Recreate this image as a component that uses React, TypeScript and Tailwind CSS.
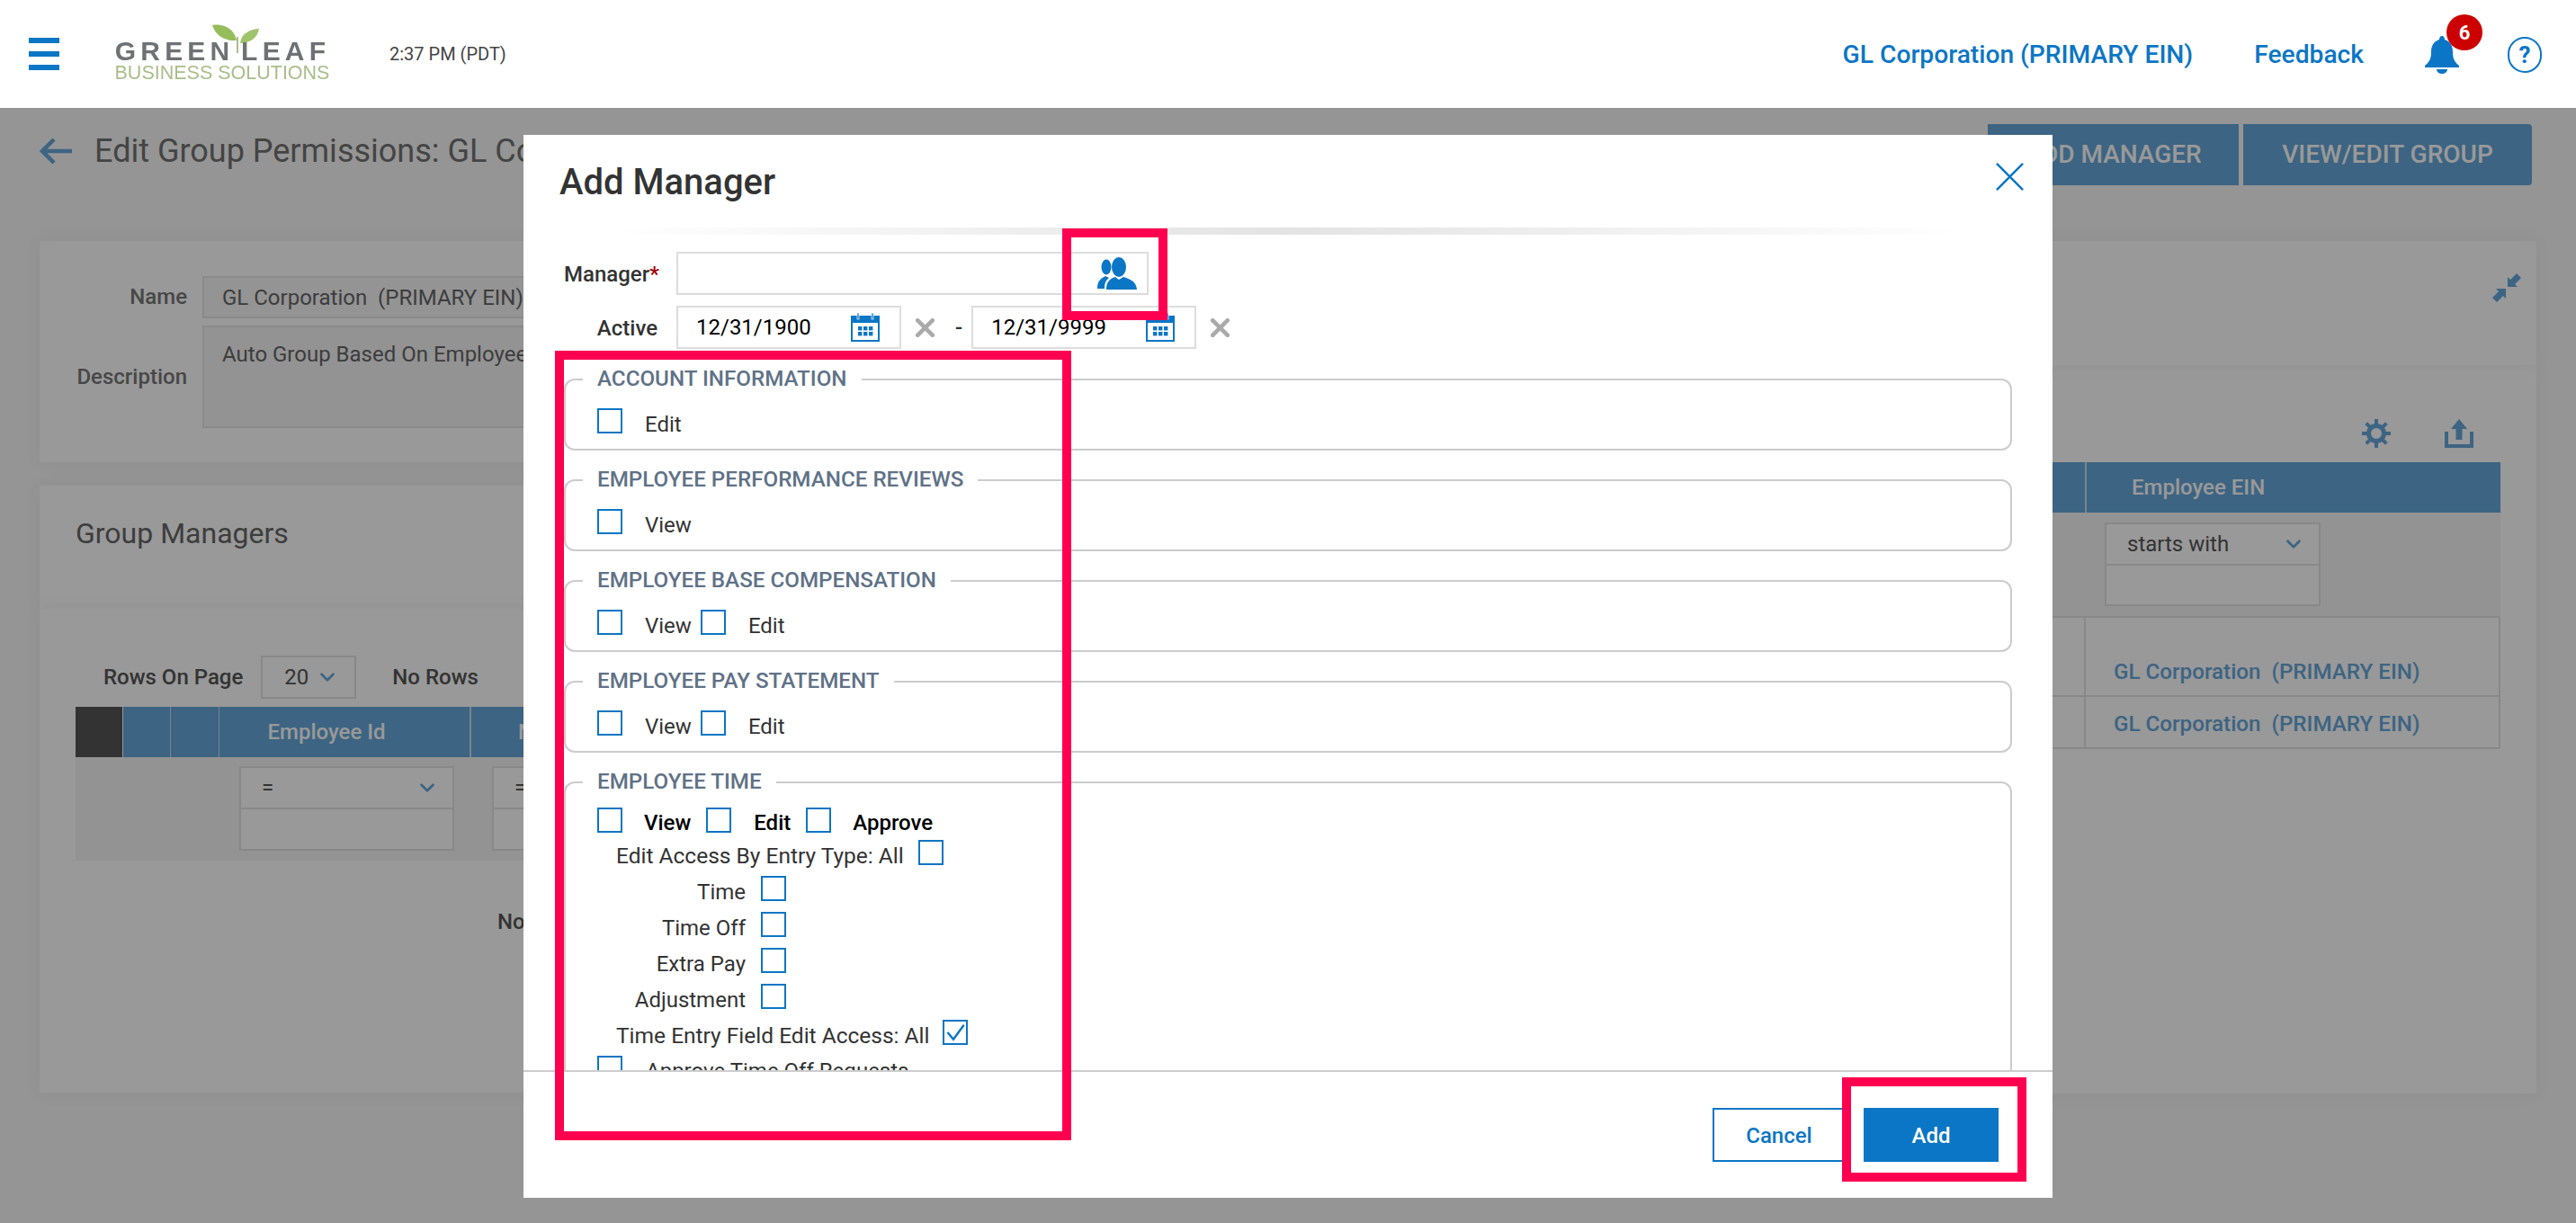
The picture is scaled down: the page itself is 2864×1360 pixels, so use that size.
import React from "react";
import { ChevronDown } from "lucide-react";

const font = { fontFamily: '"Roboto", "Liberation Sans", sans-serif' };

function Check({ checked = false }: { checked?: boolean }) {
  return (
    <span className="flex h-[28px] w-[28px] shrink-0 items-center justify-center border-2 border-[#0b76c5] bg-white">
      {checked && (
        <svg width="24" height="24" viewBox="0 0 24 24" fill="none">
          <path d="M3.5 12 L10 19.7 L21.7 3.7" stroke="#0b76c5" strokeWidth="2.4" />
        </svg>
      )}
    </span>
  );
}

function Fieldset({ title, children, className }: { title: string; children: React.ReactNode; className: string }) {
  return (
    <div className={`relative shrink-0 rounded-[12px] border-2 border-[#cccccc] ${className}`}>
      <div className="absolute left-[19px] top-[-16px] bg-white px-[16px] text-[24.2px] leading-[28px] font-medium text-[#5f7287]">
        {title}
      </div>
      {children}
    </div>
  );
}

function Calendar() {
  return (
    <svg width="32" height="32" viewBox="0 0 32 32">
      <rect x="0" y="3" width="32" height="29" fill="#0b76c5" />
      <rect x="2" y="11" width="28" height="19" fill="#fff" />
      <rect x="7" y="0" width="2" height="7" fill="#0b76c5" stroke="#fff" strokeWidth="0.7" />
      <rect x="23" y="0" width="2" height="7" fill="#0b76c5" stroke="#fff" strokeWidth="0.7" />
      {[8, 14, 20].map((x) =>
        [15, 21].map((y) => <rect key={`${x}-${y}`} x={x} y={y} width="4.4" height="4.4" fill="#0b76c5" />)
      )}
    </svg>
  );
}

function People() {
  return (
    <svg width="46" height="36" viewBox="0 0 46 36" fill="#0b76c5">
      <ellipse cx="11" cy="11" rx="5.5" ry="8.5" />
      <path d="M1 35 C1 27 4 24 10 21 L14 23 C10 26 9 30 9 35 Z" />
      <ellipse cx="25" cy="11" rx="8" ry="11" />
      <path d="M11 36 C11 27 15 24 21 22 L25 25 L30 22 C39 25 44 27 45 36 Z" />
    </svg>
  );
}

function Cross({ size, color, width }: { size: number; color: string; width: number }) {
  return (
    <svg width={size} height={size} viewBox="0 0 32 32" fill="none" stroke={color} strokeWidth={width}>
      <path d="M1 1 L31 31 M31 1 L1 31" />
    </svg>
  );
}

function DateField({ value }: { value: string }) {
  return (
    <div className="flex h-[48px] w-[250px] items-center justify-between border-2 border-[#dddddd] pl-[20px] pr-[22px] text-[24px] text-black">
      <span>{value}</span>
      <Calendar />
    </div>
  );
}

function Section({ title, items }: { title: string; items: string[] }) {
  return (
    <Fieldset title={title} className="h-[80px] w-[1610px]">
      <div className="flex h-full items-start pl-[35px] pt-[31px] text-[24px] leading-[28px] text-[#333333]">
        {items.map((it) => (
          <div key={it} className="flex items-start">
            <Check />
            <span className="ml-[25px] mr-[10px] mt-[4px]">{it}</span>
          </div>
        ))}
      </div>
    </Fieldset>
  );
}

function FilterBox({ label, className }: { label: string; className: string }) {
  return (
    <div className={`border-2 border-[#e3e3e3] bg-white ${className}`}>
      <div className="flex h-[46px] items-center justify-between border-b-2 border-[#e3e3e3] pl-[23px] pr-[15px] text-[24px] text-[#555555]">
        <span>{label}</span>
        <ChevronDown className="h-[26px] w-[26px] text-[#66a7d9]" strokeWidth={2.5} />
      </div>
      <div className="h-[46px]" />
    </div>
  );
}

function TypeRow({ label, checked }: { label: string; checked?: boolean }) {
  return (
    <div className="flex h-[40px] items-start">
      <span className="mt-[4px] w-[165px] text-right">{label}</span>
      <span className="ml-[17px]">
        <Check checked={checked} />
      </span>
    </div>
  );
}

export default function App() {
  return (
    <div className="relative h-[1360px] w-[2864px] overflow-hidden bg-[#f8f8f8]" style={font}>
      <header className="relative z-20 flex h-[120px] items-center bg-white">
        <div className="ml-[32px] flex w-[34px] flex-col gap-[9px]">
          <span className="h-[6px] bg-[#0b76c5]" />
          <span className="h-[6px] bg-[#0b76c5]" />
          <span className="h-[6px] bg-[#0b76c5]" />
        </div>
        <div className="relative ml-[60px] h-[70px] w-[240px] blur-[0.5px]">
          <svg className="absolute left-[108px] top-[0px]" width="56" height="34" viewBox="0 0 56 34">
            <path d="M2 3 C14 1 27 7 29 20 C18 21 6 16 2 3 Z" fill="#96bd5c" />
            <path d="M54 7 C45 7 34 12 33 23 C43 23 52 18 54 7 Z" fill="#9fc36a" />
            <path d="M30 16 V40" stroke="#a9bf90" strokeWidth="2" />
          </svg>
          <div
            className="absolute left-0 top-[17px] w-[243px] text-center text-[30px] leading-[30px] font-bold tracking-[5.2px] whitespace-nowrap text-[#6f7274]"
            style={{ fontFamily: '"Liberation Sans", sans-serif' }}
          >
            GREEN&#8202;LEAF
          </div>
          <div
            className="absolute left-0 top-[44px] w-[242px] text-center text-[21.5px] leading-[24px] whitespace-nowrap text-[#a9bd8b]"
            style={{ fontFamily: '"Liberation Sans", sans-serif' }}
          >
            BUSINESS SOLUTIONS
          </div>
        </div>
        <div className="ml-[67px] text-[20px] text-[#444444]">2:37 PM (PDT)</div>
        <div className="ml-auto flex items-center pt-[3px] text-[28.2px] font-medium text-[#0b76c5]">
          <span>GL Corporation (PRIMARY EIN)</span>
          <span className="ml-[68px]">Feedback</span>
          <div className="relative ml-[68px] h-[42px] w-[38px]">
            <svg width="38" height="42" viewBox="0 0 38 42" fill="#0b76c5">
              <path d="M19 0 C21 0 22 2 22 4 C29 6 31 12 31 18 C31 25 33 29 38 33 V35 H0 V33 C5 29 7 25 7 18 C7 12 9 6 16 4 C16 2 17 0 19 0 Z" />
              <path d="M13 37 H25 C25 40 22 42 19 42 C16 42 13 40 13 37 Z" />
            </svg>
            <span className="absolute left-[24px] top-[-24px] flex h-[40px] w-[40px] items-center justify-center rounded-full bg-[#cc0000] text-[22px] font-bold text-white">
              6
            </span>
          </div>
          <span className="ml-[54px] mr-[38px] flex h-[40px] w-[38px] items-center justify-center rounded-full border-2 border-[#0b76c5] text-[26px] font-bold">
            ?
          </span>
        </div>
      </header>

      <main className="px-[44px]">
        <div className="flex h-[148px] items-start justify-between">
          <div className="flex items-center pt-[21px] text-[36px] text-[#727272]">
            <svg width="36" height="30" viewBox="0 0 36 30" fill="none" stroke="#66a7d9" strokeWidth="4.5">
              <path d="M36 15 H3 M16 2 L3 15 L16 28" />
            </svg>
            <span className="ml-[25px] w-[477px] overflow-hidden whitespace-nowrap">Edit Group Permissions: GL Corporation (PRIMARY EIN)</span>
          </div>
          <div className="mr-[5px] mt-[18px] flex gap-[5px] text-[28px] font-medium text-white">
            <div className="flex h-[68px] w-[279px] items-center justify-center bg-[#66a7d9]">ADD MANAGER</div>
            <div className="flex h-[68px] w-[321px] items-center justify-center rounded-r-[4px] bg-[#66a7d9]">VIEW/EDIT GROUP</div>
          </div>
        </div>

        <div className="flex items-start">
          <div className="w-[1400px] shrink-0">
            <section className="flex h-[246px] bg-white pt-[39px] shadow-[0_0_20px_rgba(0,0,0,0.05)]">
              <div className="w-[164px] shrink-0 text-right text-[24px] font-medium text-[#777777]">
                <div className="flex h-[46px] items-center justify-end">Name</div>
                <div className="mt-[48px]">Description</div>
              </div>
              <div className="ml-[17px] flex-1 pr-[20px] text-[24px] text-[#666666]">
                <div className="flex h-[47px] items-center border-2 border-[#e6e6e6] bg-[#f7f7f7] pl-[20px]">GL Corporation&nbsp; (PRIMARY EIN)</div>
                <div className="mt-[8px] h-[114px] border-2 border-[#e6e6e6] bg-[#f5f5f5] pl-[20px] pt-[12px]">Auto Group Based On Employee EIN</div>
              </div>
            </section>
            <section className="mt-[26px] flex h-[137px] items-start bg-white pl-[40px] pt-[29px] text-[32px] text-[#666666] shadow-[0_0_20px_rgba(0,0,0,0.05)]">
              Group Managers
            </section>
            <section className="h-[538px] bg-white pl-[40px] pr-[20px] shadow-[0_0_20px_rgba(0,0,0,0.05)]">
              <div className="flex h-[109px] items-center pl-[31px] pt-[43px] text-[24px] font-medium text-[#555555]">
                <span>Rows On Page</span>
                <div className="ml-[20px] flex h-[48px] w-[106px] items-center border-2 border-[#e3e3e3] pl-[24px] font-normal">
                  20
                  <ChevronDown className="ml-[8px] h-[26px] w-[26px] text-[#66a7d9]" strokeWidth={2.5} />
                </div>
                <span className="ml-[40px]">No Rows</span>
                <svg className="ml-[123px]" width="40" height="36" viewBox="0 0 40 36" fill="none" stroke="#66a7d9" strokeWidth="3">
                  <path d="M2 8 L12 18 M2 8 V17 M2 8 H11" />
                  <path d="M5 24 L15 32" />
                </svg>
              </div>
              <div className="flex h-[56px] text-[24px] font-medium text-white">
                <div className="w-[52px] bg-[#555555]" />
                <div className="ml-[1px] w-[53px] border-r border-[#c9dcec] bg-[#66a7d9]" />
                <div className="w-[54px] border-r border-[#c9dcec] bg-[#66a7d9]" />
                <div className="flex w-[280px] items-center justify-center border-r-2 border-[#c9dcec] bg-[#66a7d9] pr-[40px]">Employee Id</div>
                <div className="flex flex-1 items-center bg-[#66a7d9] pl-[52px]">Name</div>
              </div>
              <div className="flex h-[115px] bg-[#f5f5f5] pl-[182px] pt-[10px]">
                <FilterBox label="=" className="h-[94px] w-[239px]" />
                <FilterBox label="=" className="ml-[42px] h-[94px] w-[239px]" />
              </div>
              <div className="pl-[469px] pt-[50px] text-[24px] font-medium text-[#555555]">No Rows To Show</div>
            </section>
          </div>

          <div className="ml-[20px] flex-1">
            <section className="relative h-[138px] bg-white shadow-[0_0_20px_rgba(0,0,0,0.05)]">
              <svg className="absolute right-[17px] top-[36px]" width="32" height="32" viewBox="0 0 32 32" fill="#66a7d9">
                <path d="M27 0 L32 5 L25 12 L28 15 H17 V4 L20 7 Z" />
                <path d="M5 32 L0 27 L7 20 L4 17 H15 V28 L12 25 Z" />
              </svg>
            </section>
            <section className="h-[810px] bg-white shadow-[0_0_20px_rgba(0,0,0,0.05)]">
              <div className="flex h-[108px] items-start justify-end pr-[70px] pt-[60px]">
                <svg width="32" height="32" viewBox="0 0 32 32" fill="none" stroke="#66a7d9">
                  <circle cx="16" cy="16" r="8.5" strokeWidth="5" />
                  <path d="M16 0 V32 M0 16 H32 M4.7 4.7 L27.3 27.3 M27.3 4.7 L4.7 27.3" strokeWidth="4" strokeDasharray="6 20 6 0" />
                </svg>
                <svg className="ml-[60px]" width="32" height="32" viewBox="0 0 32 32" fill="#66a7d9">
                  <path d="M16 0 L25 11 H19.5 V23 H12.5 V11 H7 Z" />
                  <path d="M0 14 H4 V28 H28 V14 H32 V32 H0 Z" />
                </svg>
              </div>
              <div className="mr-[40px]">
                <div className="flex h-[56px] bg-[#66a7d9] text-[24px] font-medium text-white">
                  <div className="flex-1 border-r-2 border-[#c9dcec]" />
                  <div className="flex w-[460px] items-center pl-[50px]">Employee EIN</div>
                </div>
                <div className="flex h-[115px] justify-end bg-[#f5f5f5] pt-[11px]">
                  <FilterBox label="starts with" className="mr-[200px] h-[93px] w-[240px]" />
                </div>
                <div className="border-2 border-[#e3e3e3] text-[24.2px] font-medium text-[#66a7d9]">
                  <div className="flex h-[88px] border-b-2 border-[#e3e3e3]">
                    <div className="flex-1 border-r-2 border-[#e3e3e3]" />
                    <div className="flex w-[459px] items-end pb-[8px] pl-[31px]">GL Corporation&nbsp; (PRIMARY EIN)</div>
                  </div>
                  <div className="flex h-[56px]">
                    <div className="flex-1 border-r-2 border-[#e3e3e3]" />
                    <div className="flex w-[459px] items-center pl-[31px] pt-[4px]">GL Corporation&nbsp; (PRIMARY EIN)</div>
                  </div>
                </div>
              </div>
            </section>
          </div>
        </div>
      </main>

      <div className="absolute inset-x-0 bottom-0 top-[120px] z-10 bg-black/40" />

      <div className="absolute left-[582px] top-[150px] z-20 flex h-[1182px] w-[1700px] flex-col bg-white text-[#333333]">
        <div className="relative flex h-[103px] shrink-0 items-start justify-between pl-[40px] pr-[32px] pt-[27px]">
          <h2 className="text-[40px] leading-[52px] font-medium text-[#333333]">Add Manager</h2>
          <span className="mt-[4px]">
            <Cross size={31} color="#0b76c5" width={2.6} />
          </span>
          <div className="absolute inset-x-[100px] bottom-[-8px] h-[8px] bg-gradient-to-r from-transparent via-[#e3e3e3] to-transparent" />
        </div>

        <div className="flex-1 overflow-hidden pl-[45px]">
          <div className="mt-[27px] flex h-[48px] items-center">
            <span className="mt-[2px] w-[104px] text-right text-[24px] font-medium">
              Manager<span className="text-[#a00000]">*</span>
            </span>
            <div className="ml-[21px] flex h-[48px] w-[525px] items-center justify-end border-2 border-[#dddddd] pr-[10px]">
              <People />
            </div>
          </div>
          <div className="mt-[12px] flex h-[48px] items-center">
            <span className="mt-[2px] w-[104px] text-right text-[24px] font-medium">Active</span>
            <div className="ml-[21px]">
              <DateField value="12/31/1900" />
            </div>
            <span className="mx-[16px]">
              <Cross size={21} color="#aaaaaa" width={7} />
            </span>
            <span className="ml-[7px] text-[24px] font-medium">-</span>
            <div className="ml-[10px]">
              <DateField value="12/31/9999" />
            </div>
            <span className="mx-[16px]">
              <Cross size={21} color="#aaaaaa" width={7} />
            </span>
          </div>

          <div className="mt-[33px] flex flex-col gap-[32px]">
            <Section title="ACCOUNT INFORMATION" items={["Edit"]} />
            <Section title="EMPLOYEE PERFORMANCE REVIEWS" items={["View"]} />
            <Section title="EMPLOYEE BASE COMPENSATION" items={["View", "Edit"]} />
            <Section title="EMPLOYEE PAY STATEMENT" items={["View", "Edit"]} />
            <Fieldset title="EMPLOYEE TIME" className="h-[420px] w-[1610px]">
              <div className="pl-[35px] pt-[27px] text-[24px] leading-[28px] text-[#333333]">
                <div className="flex h-[36px] items-start text-black">
                  <Check />
                  <span className="ml-[24px] mr-[17px] mt-[3px] font-medium">View</span>
                  <Check />
                  <span className="ml-[25px] mr-[17px] mt-[3px] font-medium">Edit</span>
                  <Check />
                  <span className="ml-[24px] mt-[3px] font-medium">Approve</span>
                </div>
                <div className="ml-[21px] flex h-[40px] items-start">
                  <span className="mt-[4px] text-[24.5px]">Edit Access By Entry Type: All</span>
                  <span className="ml-[16px]"><Check /></span>
                </div>
                <TypeRow label="Time" />
                <TypeRow label="Time Off" />
                <TypeRow label="Extra Pay" />
                <TypeRow label="Adjustment" />
                <div className="ml-[21px] flex h-[40px] items-start">
                  <span className="mt-[4px] text-[24.5px]">Time Entry Field Edit Access: All</span>
                  <span className="ml-[14px]"><Check checked /></span>
                </div>
                <div className="flex h-[40px] items-start">
                  <Check />
                  <span className="ml-[26px] mt-[3px]">Approve Time Off Requests</span>
                </div>
              </div>
            </Fieldset>
          </div>
        </div>

        <div className="flex h-[142px] shrink-0 items-start justify-end gap-[20px] border-t-2 border-[#cccccc] pr-[60px] pt-[40px] text-[24px] font-medium">
          <button className="flex h-[60px] w-[148px] items-center justify-center border-2 border-[#0b76c5] pt-[2px] text-[#0b76c5]">Cancel</button>
          <button className="flex h-[60px] w-[150px] items-center justify-center bg-[#0b76c5] pt-[2px] text-white">Add</button>
        </div>
      </div>

      <div className="absolute left-[1181px] top-[254px] z-30 h-[102px] w-[117px] border-[10px] border-[#ff0050]" />
      <div className="absolute left-[617px] top-[390px] z-30 h-[878px] w-[574px] border-[10px] border-[#ff0050]" />
      <div className="absolute left-[2048px] top-[1198px] z-30 h-[116px] w-[205px] border-[10px] border-[#ff0050]" />
    </div>
  );
}
